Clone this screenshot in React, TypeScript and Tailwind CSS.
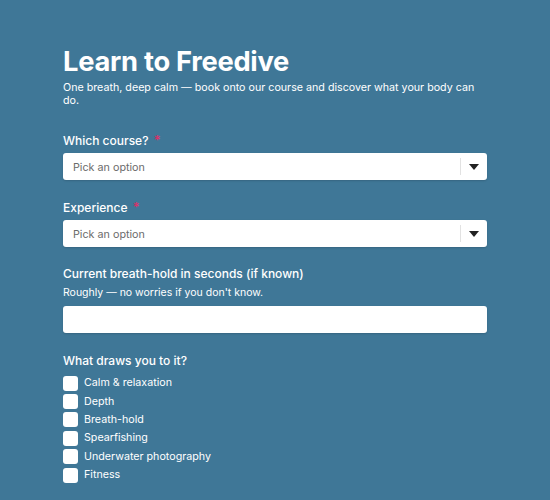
import {useState} from "react";

const courses = ["Taster session", "Beginner course", "Advanced course"];
const levels = ["None", "Some snorkelling", "Certified diver"];
const reasons = [
  "Calm & relaxation",
  "Depth",
  "Breath-hold",
  "Spearfishing",
  "Underwater photography",
  "Fitness",
];

const Caret = () => (
  <svg width="10" height="6" viewBox="0 0 10 6" className="fill-[#222]">
    <path d="M0 0h10L5 6z" />
  </svg>
);

const SelectField = ({label, options}: {label: string; options: string[]}) => {
  const [value, setValue] = useState("");
  return (
    <div className="flex flex-col">
      <label className="h-4 text-[12px] font-medium leading-4 mt-px mb-[4px]">
        {label} <span className="text-[#d8336a] text-[13px] font-semibold leading-none ml-0.5">*</span>
      </label>
      <div className="relative h-[27px] bg-white rounded-[3px] shadow-[0_1px_2px_rgba(0,0,0,0.15)]">
        <select
          value={value}
          onChange={(e) => setValue(e.target.value)}
          className="appearance-none w-full h-full bg-transparent pl-[10px] pr-10 text-[10.75px] text-[#6b6b6b] outline-none"
        >
          <option value="">Pick an option</option>
          {options.map((o) => (
            <option key={o}>{o}</option>
          ))}
        </select>
        <div className="absolute right-0 top-0 h-full flex items-center pointer-events-none">
          <div className="w-px h-[17px] bg-[#e2e2e2]" />
          <div className="w-[26px] flex justify-center">
            <Caret />
          </div>
        </div>
      </div>
    </div>
  );
};

const App = () => {
  const [picked, setPicked] = useState<string[]>([]);
  const toggle = (r: string) =>
    setPicked((xs) => (xs.includes(r) ? xs.filter((x) => x !== r) : [...xs, r]));

  return (
    <div className="min-h-screen bg-[#3f7797] text-white font-['Inter',sans-serif]">
      <div className="w-[424px] ml-[63px] pt-[46px] pb-8">
        <h1 className="text-[27.3px] font-bold leading-8 tracking-[-0.01em]">Learn to Freedive</h1>
        <p className="text-[10.7px] leading-[13px] mt-[3px]">
          One breath, deep calm — book onto our course and discover what your body can do.
        </p>

        <div className="flex flex-col gap-[19px] mt-[25px]">
          <SelectField label="Which course?" options={courses} />
          <SelectField label="Experience" options={levels} />

          <div className="flex flex-col">
            <label className="h-4 text-[12px] font-medium leading-4">
              Current breath-hold in seconds (if known)
            </label>
            <span className="text-[10.5px] leading-[14px] mt-[4px] mb-[6px]">
              Roughly — no worries if you don't know.
            </span>
            <input
              type="number"
              className="h-[27px] bg-white rounded-[3px] px-[10px] text-[11px] text-[#333] outline-none shadow-[0_1px_2px_rgba(0,0,0,0.15)]"
            />
          </div>

          <div className="flex flex-col mt-px">
            <span className="h-4 text-[12px] font-medium leading-4 mb-[5px]">What draws you to it?</span>
            {reasons.map((r) => (
              <label key={r} className="flex items-center gap-[6px] h-[18.4px] text-[10.7px]">
                <input
                  type="checkbox"
                  checked={picked.includes(r)}
                  onChange={() => toggle(r)}
                  className="appearance-none size-[15px] bg-white rounded-[3px] checked:bg-[#1c5574]"
                />
                {r}
              </label>
            ))}
          </div>
        </div>
      </div>
    </div>
  );
};

export default App;
